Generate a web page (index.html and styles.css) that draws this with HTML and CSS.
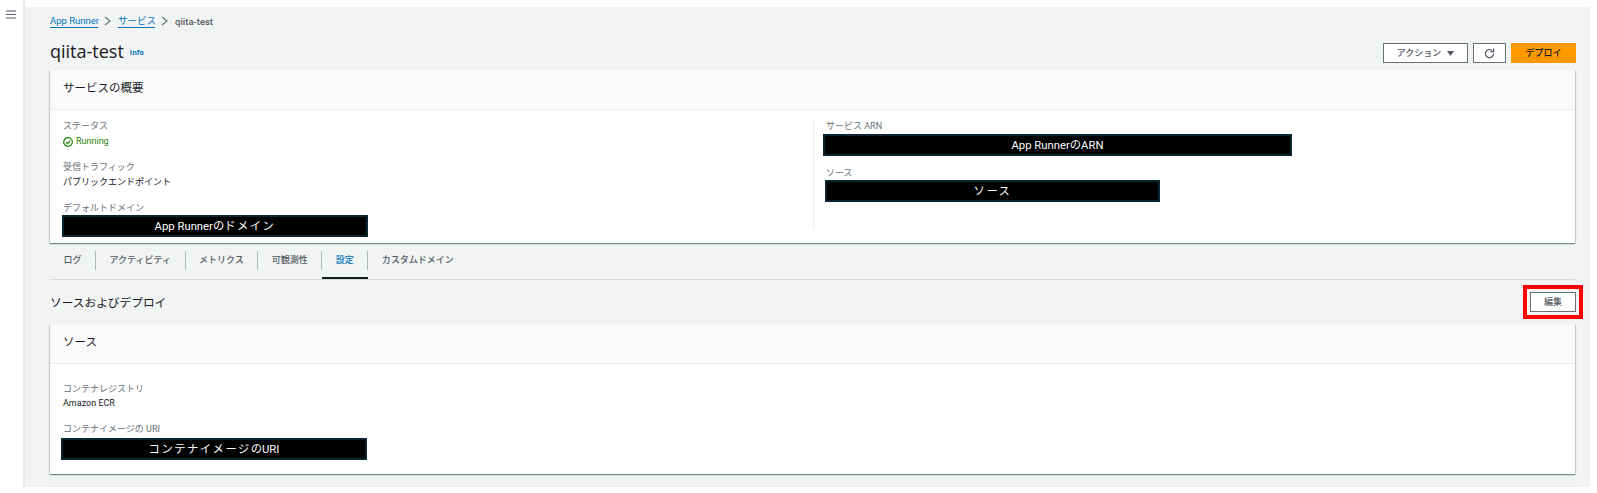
FILE: index.html
```html
<!DOCTYPE html>
<html lang="ja">
<head>
<meta charset="utf-8">
<title>qiita-test</title>
<link rel="stylesheet" href="styles.css">
</head>
<body>
<div class="shell">
  <aside class="rail">
    <svg class="menu-icon" width="10" height="9" viewBox="0 0 10 9"><path d="M0 1h10M0 4.5h10M0 8h10" stroke="#545b64" stroke-width="1.2" fill="none"/></svg>
  </aside>
  <main class="main">
    <nav class="crumbs">
      <a class="crumb-link crumb-a">App Runner</a>
      <svg class="chev" width="7" height="10" viewBox="0 0 7 10"><path d="M1 1l5 4-5 4" stroke="#687078" stroke-width="1.2" fill="none"/></svg>
      <a class="crumb-link crumb-b">サービス</a>
      <svg class="chev" width="7" height="10" viewBox="0 0 7 10"><path d="M1 1l5 4-5 4" stroke="#687078" stroke-width="1.2" fill="none"/></svg>
      <span class="crumb-current">qiita-test</span>
    </nav>
    <header class="page-head">
      <div class="title-wrap"><h1 class="title">qiita-test</h1><a class="info">Info</a></div>
      <div class="actions">
        <button class="btn btn-action">アクション
          <svg width="7" height="5" viewBox="0 0 7 5"><path d="M0 0h7L3.5 5z" fill="#545b64"/></svg>
        </button>
        <button class="btn btn-refresh">
          <svg width="11" height="11" viewBox="0 0 11 11"><path d="M9.6 5.6a4.1 4.1 0 1 1-1.3-3" stroke="#545b64" stroke-width="1.2" fill="none"/><path d="M9.6.6v3h-3" stroke="#545b64" stroke-width="1.2" fill="none"/></svg>
        </button>
        <button class="btn btn-primary">デプロイ</button>
      </div>
    </header>

    <section class="card">
      <h2 class="card-head">サービスの概要</h2>
      <div class="summary">
        <div class="col-left">
          <div class="label">ステータス</div>
          <div class="value status">
            <svg width="10" height="10" viewBox="0 0 10 10"><circle cx="5" cy="5" r="4.3" stroke="#1d8102" stroke-width="1.2" fill="none"/><path d="M2.9 5.1l1.6 1.6 2.7-3" stroke="#1d8102" stroke-width="1.2" fill="none"/></svg>
            Running
          </div>
          <div class="label gap">受信トラフィック</div>
          <div class="value">パブリックエンドポイント</div>
          <div class="label gap label-tight">デフォルトドメイン</div>
          <div class="redact redact-domain">App Runnerの<span class="wide">ドメイン</span></div>
        </div>
        <div class="col-right">
          <div class="label">サービス ARN</div>
          <div class="redact redact-arn">App RunnerのARN</div>
          <div class="label source-label">ソース</div>
          <div class="redact redact-source"><span class="wide">ソース</span></div>
        </div>
      </div>
    </section>

    <nav class="tabs">
      <a class="tab"><span class="tab-label">ログ</span></a>
      <a class="tab"><span class="tab-label">アクティビティ</span></a>
      <a class="tab"><span class="tab-label">メトリクス</span></a>
      <a class="tab"><span class="tab-label">可観測性</span></a>
      <a class="tab tab-active"><span class="tab-label">設定</span></a>
      <a class="tab"><span class="tab-label tab-last">カスタムドメイン</span></a>
    </nav>

    <div class="section-head">
      <h2 class="section-title">ソースおよびデプロイ</h2>
      <button class="btn btn-edit">編集</button>
    </div>

    <section class="card">
      <h2 class="card-head">ソース</h2>
      <div class="source-body">
        <div class="label label-first">コンテナレジストリ</div>
        <div class="value">Amazon ECR</div>
        <div class="label label-uri">コンテナイメージの URI</div>
        <div class="redact redact-uri"><span class="wide">コンテナイメージ</span>のURI</div>
      </div>
    </section>

    <div class="card-stub"></div>
  </main>
</div>
</body>
</html>
```

FILE: styles.css
```css
* { box-sizing: border-box; }
html, body { margin: 0; padding: 0; height: 493px; overflow: hidden; background: #fff; }
body { font-family: Roboto, "Noto Sans CJK JP", sans-serif; color: #16191f; font-size: 9px; }

.shell { display: flex; height: 487px; padding-top: 7px; }
.rail { width: 25px; flex: none; margin-top: -7px; border-right: 2px solid #e6e8e8; height: 487px; padding: 10px 0 0 6px; }
.menu-icon { display: block; }

.main { width: 1565px; flex: none; background: #f2f3f3; padding: 7px 15px 0 25px; height: 480px; overflow: hidden; }

.crumbs { display: flex; align-items: center; height: 14px; font-size: 9.5px; }
.crumb-link { color: #0073bb; border-bottom: 1px solid #0073bb; line-height: 12px; }
.crumb-a { width: 48px; white-space: nowrap; }
.crumb-b { width: 37px; white-space: nowrap; }
.chev { margin: 0 7px 0 6px; flex: none; }
.crumb-current { color: #545b64; font-weight: 500; }

.page-head { display: flex; justify-content: space-between; align-items: center; height: 20px; margin: 15px -1px 7px 0; }
.title-wrap { display: flex; align-items: flex-start; margin-top: -5px; }
.title { margin: 0; font: 400 18px/20px "Open Sans", sans-serif; }
.info { margin: 7px 0 0 6px; font: 700 7px/10px "Open Sans", sans-serif; color: #0073bb; }
.actions { display: flex; gap: 5px; }

.btn { height: 20px; padding: 0; background: #fff; border: 1px solid #687078; border-radius: 0; font: 500 9px/18px Roboto, "Noto Sans CJK JP", sans-serif; color: #545b64; display: flex; align-items: center; justify-content: center; }
.btn-action { width: 85px; gap: 6px; }
.btn-refresh { width: 33px; }
.btn-primary { width: 65px; background: #ff9900; border-color: #ff9900; color: #16191f; }
.btn-edit { width: 46px; margin-right: -1px; outline: 4px solid #f00; outline-offset: 3px; }

.card { background: #fff; box-shadow: 0 1px 1px rgba(0, 28, 36, .3), 1px 1px 1px rgba(0, 28, 36, .15), -1px 1px 1px rgba(0, 28, 36, .15); }
.card-head { margin: 0; height: 40px; padding-left: 13px; background: #fafafa; border-bottom: 1px solid #eaeded; font: 400 11.5px/36px Roboto, "Noto Sans CJK JP", sans-serif; color: #16191f; }

.summary { display: flex; height: 133px; padding-top: 9px; }
.col-left { width: 763px; flex: none; padding-left: 13px; }
.col-right { width: 480px; height: 110px; padding-left: 12px; border-left: 1px solid #eaeded; }

.label { font-size: 9px; line-height: 15px; color: #687078; }
.value { font-size: 9px; line-height: 15px; color: #16191f; }
.gap { margin-top: 11px; }
.label-tight { line-height: 14px; }
.status { display: flex; align-items: center; gap: 3px; color: #1d8102; }
.source-label { margin-top: 11px; line-height: 13px; }

.redact { height: 22px; padding-top: 1px; background: #000; border: 2px solid #0b2530; color: #fff; font: 400 11.3px/18px Roboto, "Noto Sans CJK JP", sans-serif; text-align: center; white-space: nowrap; }
.wide { letter-spacing: 1.5px; }
.redact-domain { width: 306px; margin-left: -1px; }
.redact-arn { width: 469px; margin-left: -3px; }
.redact-source { width: 335px; margin-left: -1px; }

.tabs { display: flex; height: 37px; border-bottom: 1px solid #d5dbdb; }
.tab { display: block; height: 36px; padding: 8px 0 7px; border-bottom: 2px solid transparent; margin-bottom: -1px; }
.tab-label { display: block; height: 19px; padding: 0 13.5px; border-right: 1px solid #aab7b8; font: 500 9px/18px Roboto, "Noto Sans CJK JP", sans-serif; color: #545b64; white-space: nowrap; }
.tab-last { border-right: 0; }
.tab-active { border-bottom-color: #16191f; }
.tab-active .tab-label { color: #0073bb; }

.section-head { display: flex; justify-content: space-between; align-items: center; height: 44px; }
.section-title { margin: 2px 0 0; font: 400 11.7px/18px Roboto, "Noto Sans CJK JP", sans-serif; color: #16191f; }

.source-body { height: 110px; padding-top: 18px; }
.source-body .label, .source-body .value { margin-left: 13px; }
.label-first { line-height: 14px; }
.label-uri { margin-top: 12px; line-height: 13px; }
.redact-uri { width: 306px; margin-left: 11px; margin-top: 2px; }

.card-stub { height: 1px; margin-top: 12px; background: #eaeded; }
```
